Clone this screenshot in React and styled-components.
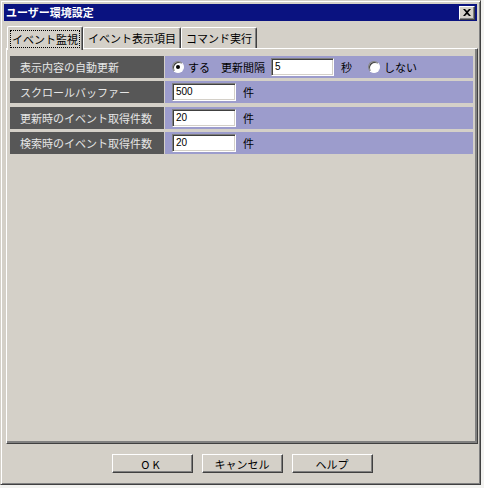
import React from 'react';
import styled, { createGlobalStyle } from 'styled-components';

const GlobalStyle = createGlobalStyle`
  html, body {
    margin: 0;
    padding: 0;
    background: #f2f2f0;
  }
  body {
    font-family: "Noto Sans CJK JP", "Noto Sans", sans-serif;
    font-size: 11px;
  }
`;

const raised = `
  border-top: 1px solid #ffffff;
  border-left: 1px solid #ffffff;
  border-right: 1px solid #404040;
  border-bottom: 1px solid #404040;
  box-shadow: inset -1px -1px 0 #808080;
`;

const Window = styled.div`
  box-sizing: border-box;
  width: 481px;
  height: 485px;
  background: #d4d0c8;
  border-top: 1px solid #d4d0c8;
  border-left: 1px solid #d4d0c8;
  border-right: 1px solid #404040;
  border-bottom: 1px solid #404040;
  box-shadow: inset 1px 1px 0 #ffffff, inset -1px -1px 0 #808080;
  padding: 3px;
  display: flex;
  flex-direction: column;
`;

const TitleBar = styled.div`
  height: 17px;
  background: #0a1280;
  display: flex;
  align-items: center;
  justify-content: space-between;
  padding: 0 2px 0 2px;
`;

const Title = styled.span`
  color: #ffffff;
  font-weight: bold;
  font-size: 11px;
  line-height: 17px;
`;

const CloseButton = styled.div`
  box-sizing: border-box;
  width: 16px;
  height: 14px;
  background: #d4d0c8;
  ${raised}
  display: flex;
  align-items: center;
  justify-content: center;
`;

const TabRow = styled.div`
  display: flex;
  align-items: flex-end;
  height: 23px;
  margin-top: 4px;
  padding-left: 3px;
  position: relative;
  z-index: 1;
`;

const Tab = styled.div`
  box-sizing: border-box;
  height: ${({ active }) => (active ? '24px' : '21px')};
  margin-bottom: ${({ active }) => (active ? '-2px' : '0')};
  padding: 0 3px;
  background: #d4d0c8;
  border-top: 1px solid #ffffff;
  border-left: 1px solid #ffffff;
  border-right: 1px solid #404040;
  box-shadow: inset -1px 0 0 #808080;
  border-radius: 2px 2px 0 0;
  display: flex;
  align-items: center;
  font-size: 11px;
  color: #000;
  white-space: nowrap;
`;

const TabLabel = styled.span`
  padding: 0 1px;
  line-height: 16px;
  outline: ${({ focused }) => (focused ? '1px dotted #000' : 'none')};
`;

const Panel = styled.div`
  box-sizing: border-box;
  margin: 0 0 0 2px;
  width: 472px;
  height: 396px;
  border-top: 1px solid #ffffff;
  border-left: 1px solid #ffffff;
  border-right: 1px solid #404040;
  border-bottom: 1px solid #404040;
  box-shadow: inset -2px -2px 0 #808080;
  padding: 7px 4px 0 3px;
  display: flex;
  flex-direction: column;
  gap: 3px;
`;

const Row = styled.div`
  display: flex;
  height: 22px;
  gap: 1px;
  margin-bottom: ${({ extra }) => (extra ? '1px' : '0')};
`;

const Label = styled.div`
  width: 154px;
  background: #575757;
  color: #e6e6e6;
  display: flex;
  align-items: center;
  padding-left: 10px;
  box-sizing: border-box;
  font-size: 11px;
`;

const Value = styled.div`
  flex: 1;
  background: #9c9ccc;
  display: flex;
  align-items: center;
  padding-left: 7px;
  color: #000;
  font-size: 11px;
`;

const Input = styled.div`
  box-sizing: border-box;
  width: ${({ w }) => w}px;
  height: 18px;
  background: #ffffff;
  border-top: 1px solid #808080;
  border-left: 1px solid #808080;
  border-right: 1px solid #ffffff;
  border-bottom: 1px solid #ffffff;
  box-shadow: inset 1px 1px 0 #404040, inset -1px -1px 0 #d4d0c8;
  font-family: "Liberation Sans", "DejaVu Sans", sans-serif;
  font-size: 10px;
  line-height: 16px;
  padding-left: 3px;
  margin-right: ${({ mr }) => mr}px;
`;

const Radio = styled.span`
  box-sizing: border-box;
  width: 12px;
  height: 12px;
  border-radius: 50%;
  background: #ffffff;
  border: 1px solid;
  border-color: #808080 #ffffff #ffffff #808080;
  box-shadow: inset 1px 1px 0 #404040;
  display: inline-flex;
  align-items: center;
  justify-content: center;
  margin-right: 4px;
  &::after {
    content: '';
    width: 4px;
    height: 4px;
    border-radius: 50%;
    background: ${({ checked }) => (checked ? '#000' : 'transparent')};
  }
`;

const Text = styled.span`
  margin-right: ${({ mr }) => mr || 0}px;
  white-space: nowrap;
`;

const Footer = styled.div`
  display: flex;
  justify-content: center;
  gap: 9px;
  margin-top: 10px;
  padding-left: 3px;
`;

const Button = styled.div`
  box-sizing: border-box;
  width: 81px;
  height: 19px;
  background: #d4d0c8;
  ${raised}
  display: flex;
  align-items: center;
  justify-content: center;
  font-size: 11px;
  letter-spacing: ${({ spaced }) => (spaced ? '3px' : '0')};
`;

const CloseIcon = () => (
  <svg width="8" height="7" viewBox="0 0 8 7">
    <path d="M0 0h2l2 2 2-2h2L5 3.5 8 7H6L4 5 2 7H0l3-3.5z" fill="#000" />
  </svg>
);

const App = () => (
  <>
    <GlobalStyle />
    <Window>
      <TitleBar>
        <Title>ユーザー環境設定</Title>
        <CloseButton>
          <CloseIcon />
        </CloseButton>
      </TitleBar>
      <TabRow>
        <Tab active>
          <TabLabel focused>イベント監視</TabLabel>
        </Tab>
        <Tab>
          <TabLabel>イベント表示項目</TabLabel>
        </Tab>
        <Tab>
          <TabLabel>コマンド実行</TabLabel>
        </Tab>
      </TabRow>
      <Panel>
        <Row>
          <Label>表示内容の自動更新</Label>
          <Value>
            <Radio checked />
            <Text mr={11}>する</Text>
            <Text mr={6}>更新間隔</Text>
            <Input w={63} mr={7}>5</Input>
            <Text mr={16}>秒</Text>
            <Radio />
            <Text>しない</Text>
          </Value>
        </Row>
        <Row extra>
          <Label>スクロールバッファー</Label>
          <Value>
            <Input w={64} mr={7}>500</Input>
            <Text>件</Text>
          </Value>
        </Row>
        <Row>
          <Label>更新時のイベント取得件数</Label>
          <Value>
            <Input w={64} mr={7}>20</Input>
            <Text>件</Text>
          </Value>
        </Row>
        <Row>
          <Label>検索時のイベント取得件数</Label>
          <Value>
            <Input w={64} mr={7}>20</Input>
            <Text>件</Text>
          </Value>
        </Row>
      </Panel>
      <Footer>
        <Button spaced>OK</Button>
        <Button>キャンセル</Button>
        <Button>ヘルプ</Button>
      </Footer>
    </Window>
  </>
);

export default App;
